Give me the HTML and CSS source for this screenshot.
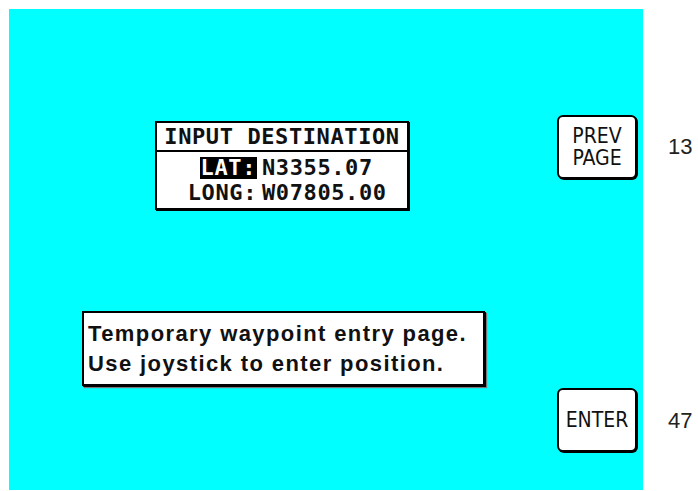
FILE: index.html
```html
<!DOCTYPE html>
<html>
<head>
    <title>Input Destination</title>
    <link rel="stylesheet" href="styles.css">
</head>
<body>
    <div class="page">
        <div class="screen">
            <div class="top-row">
                <div class="dest-box">
                    <div class="dest-title">INPUT DESTINATION</div>
                    <div class="dest-grid">
                        <span class="dest-label selected">LAT:</span>
                        <span class="dest-value">N3355.07</span>
                        <span class="dest-label">LONG:</span>
                        <span class="dest-value">W07805.00</span>
                    </div>
                </div>
                <button class="soft-key prev-key">PREV<br>PAGE</button>
            </div>
            <div class="bottom-row">
                <div class="message">
                    Temporary waypoint entry page.<br>
                    Use joystick to enter position.
                </div>
                <button class="soft-key enter-key">ENTER</button>
            </div>
        </div>
        <div class="key-numbers">
            <div class="key-num num-top">13</div>
            <div class="key-num num-bottom">47</div>
        </div>
    </div>
</body>
</html>
```

FILE: styles.css
```css
body {
    margin: 0;
    background-color: #fff;
    font-family: "Liberation Sans", Arial, sans-serif;
}
.page {
    display: flex;
    padding: 9px 0 0 9px;
}
.screen {
    width: 634px;
    height: 481px;
    background-color: #00ffff;
    box-sizing: border-box;
    padding-top: 106px;
}
.top-row {
    display: flex;
    align-items: flex-start;
    height: 196px;
}
.dest-box {
    margin-left: 146px;
    margin-top: 6px;
    width: 250px;
    height: 85px;
    background-color: #fff;
    border: 2px solid #000;
    box-shadow: 1px 1px 0 #000;
    font-family: "DejaVu Sans Mono", monospace;
    font-weight: bold;
    font-size: 22px;
    color: #111;
}
.dest-title {
    height: 27px;
    line-height: 27px;
    border-bottom: 2px solid #000;
    text-align: center;
    letter-spacing: 0.6px;
}
.dest-grid {
    display: grid;
    grid-template-columns: 100px auto;
    column-gap: 5px;
    row-gap: 3px;
    padding-top: 5px;
    line-height: 22px;
    letter-spacing: 0.6px;
}
.dest-label {
    justify-self: end;
}
.dest-label.selected {
    background-color: #000;
    color: #fff;
    padding: 0 1px;
}
.soft-key {
    width: 80px;
    height: 64px;
    background-color: #fff;
    border: 2px solid #000;
    border-radius: 6px;
    box-shadow: 1px 1px 0 #000;
    font-family: "DejaVu Sans Condensed", "DejaVu Sans", sans-serif;
    font-stretch: condensed;
    font-size: 21px;
    line-height: 22px;
    color: #111;
    padding: 0;
}
.prev-key {
    margin-left: auto;
    margin-right: 6px;
}
.bottom-row {
    display: flex;
    align-items: flex-start;
}
.message {
    margin-left: 73px;
    width: 403px;
    height: 75px;
    box-sizing: border-box;
    background-color: #fff;
    border: 2px solid #000;
    box-shadow: 1px 1px 0 #000, 2px 2px 1px #777;
    padding: 6px 0 0 4px;
    font-weight: bold;
    font-size: 22px;
    letter-spacing: 1.4px;
    line-height: 30px;
    color: #111;
}
.enter-key {
    margin-left: auto;
    margin-right: 6px;
    margin-top: 77px;
}
.key-numbers {
    padding-left: 25px;
    font-size: 22px;
    color: #222;
}
.num-top {
    margin-top: 125px;
}
.num-bottom {
    margin-top: 248px;
}
```
